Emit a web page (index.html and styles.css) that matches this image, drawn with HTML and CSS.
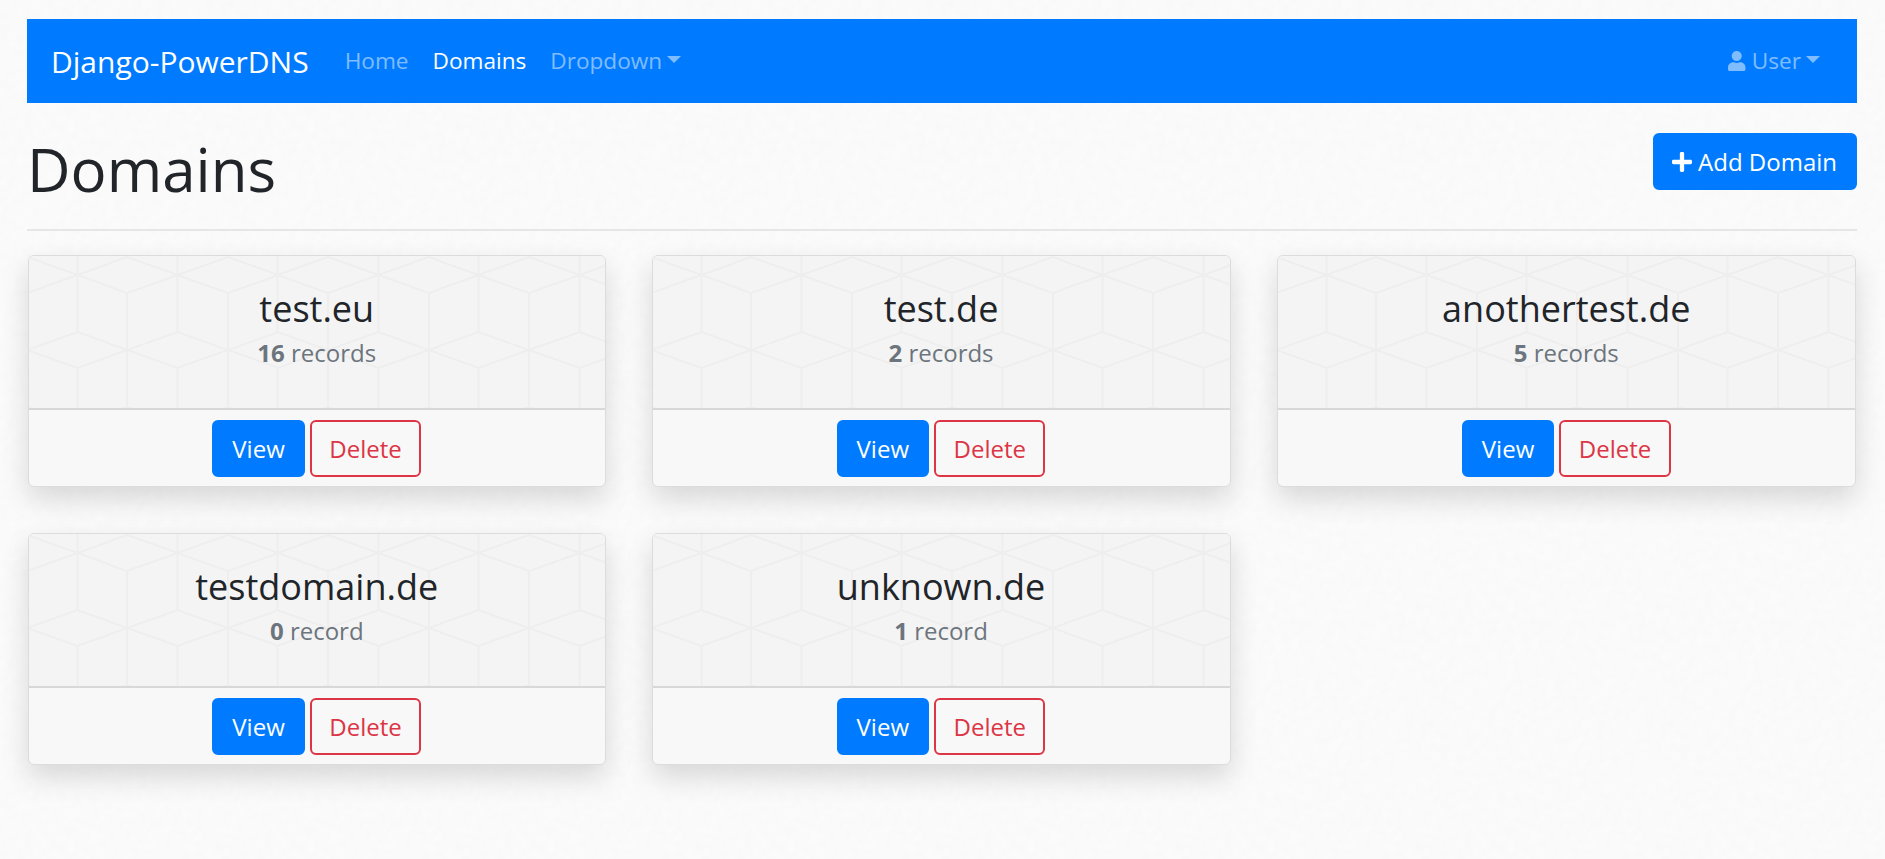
FILE: index.html
```html
<!DOCTYPE html>
<html lang="en">
<head>
<meta charset="utf-8">
<title>Domains - Django-PowerDNS</title>
<link rel="stylesheet" href="styles.css">
</head>
<body>
<nav class="navbar">
  <a class="brand" href="#">Django-PowerDNS</a>
  <ul class="nav-list">
    <li><a class="nav-link" href="#">Home</a></li>
    <li><a class="nav-link active" href="#">Domains</a></li>
    <li><a class="nav-link caret" href="#">Dropdown</a></li>
  </ul>
  <a class="nav-link caret user-link" href="#"><svg class="icon-user" viewBox="0 0 448 512" aria-hidden="true"><path d="M224 256c70.7 0 128-57.3 128-128S294.7 0 224 0 96 57.3 96 128s57.3 128 128 128zm89.6 32h-16.7c-22.2 10.2-46.9 16-72.9 16s-50.6-5.8-72.9-16h-16.7C60.2 288 0 348.2 0 422.4V464c0 26.5 21.5 48 48 48h352c26.5 0 48-21.5 48-48v-41.6c0-74.2-60.2-134.4-134.4-134.4z"/></svg> User</a>
</nav>
<main class="content">
  <header class="page-head">
    <h1 class="page-title">Domains</h1>
    <a class="btn btn-primary btn-add" href="#"><svg class="icon-plus" viewBox="0 0 448 512" aria-hidden="true"><path d="M416 208H272V64c0-17.67-14.33-32-32-32h-32c-17.67 0-32 14.33-32 32v144H32c-17.67 0-32 14.33-32 32v32c0 17.67 14.33 32 32 32h144v144c0 17.67 14.33 32 32 32h32c17.67 0 32-14.33 32-32V304h144c17.67 0 32-14.33 32-32v-32c0-17.67-14.33-32-32-32z"/></svg> Add Domain</a>
  </header>
  <hr class="divider">
  <section class="card-grid">
    <article class="card">
      <div class="card-body"><h4 class="card-title">test.eu</h4><p class="card-text"><strong>16</strong> records</p></div>
      <div class="card-footer"><a class="btn btn-primary" href="#">View</a><a class="btn btn-outline" href="#">Delete</a></div>
    </article>
    <article class="card">
      <div class="card-body"><h4 class="card-title">test.de</h4><p class="card-text"><strong>2</strong> records</p></div>
      <div class="card-footer"><a class="btn btn-primary" href="#">View</a><a class="btn btn-outline" href="#">Delete</a></div>
    </article>
    <article class="card">
      <div class="card-body"><h4 class="card-title">anothertest.de</h4><p class="card-text"><strong>5</strong> records</p></div>
      <div class="card-footer"><a class="btn btn-primary" href="#">View</a><a class="btn btn-outline" href="#">Delete</a></div>
    </article>
    <article class="card">
      <div class="card-body"><h4 class="card-title">testdomain.de</h4><p class="card-text"><strong>0</strong> record</p></div>
      <div class="card-footer"><a class="btn btn-primary" href="#">View</a><a class="btn btn-outline" href="#">Delete</a></div>
    </article>
    <article class="card">
      <div class="card-body"><h4 class="card-title">unknown.de</h4><p class="card-text"><strong>1</strong> record</p></div>
      <div class="card-footer"><a class="btn btn-primary" href="#">View</a><a class="btn btn-outline" href="#">Delete</a></div>
    </article>
  </section>
</main>
</body>
</html>
```
FILE: styles.css
```css
* { box-sizing: border-box; }
html, body { height: 100%; }
body {
  margin: 0;
  padding: 19px 28px 0 27px;
  background-color: #fcfcfc;
  background-image: url("data:image/svg+xml,%3Csvg xmlns='http://www.w3.org/2000/svg' width='240' height='240'%3E%3Cfilter id='n'%3E%3CfeTurbulence type='fractalNoise' baseFrequency='.12' numOctaves='3' stitchTiles='stitch'/%3E%3CfeColorMatrix values='0 0 0 0 0 0 0 0 0 0 0 0 0 0 0 .016 0 0 0 0'/%3E%3C/filter%3E%3Crect width='240' height='240' filter='url(%23n)'/%3E%3C/svg%3E");
  color: #212529;
  font-family: "Open Sans", sans-serif;
  font-size: 24px;
  line-height: 36px;
  overflow: hidden;
}
a { text-decoration: none; }
.navbar {
  display: flex;
  align-items: center;
  height: 84px;
  padding: 0 24px;
  background: #007bff;
}
.brand {
  margin-right: 24px;
  color: #fff;
  font-size: 30px;
  line-height: 45px;
}
.nav-list {
  display: flex;
  flex: 1;
  margin: 0;
  padding: 0;
  list-style: none;
}
.nav-link {
  display: block;
  padding: 0 12px;
  color: rgba(255,255,255,.5);
  font-size: 22.6px;
}
.nav-link.active { color: #fff; }
.caret::after {
  content: "";
  display: inline-block;
  margin-left: 5px;
  vertical-align: 6px;
  border-top: 7px solid;
  border-left: 7px solid transparent;
  border-right: 7px solid transparent;
}
.user-link { padding-right: 13px; }
.icon-user { width: 17.5px; height: 20px; fill: currentColor; vertical-align: -2px; }
.icon-plus { width: 20px; height: 24px; fill: currentColor; vertical-align: -3px; }
.page-head {
  display: flex;
  justify-content: space-between;
  align-items: flex-start;
  padding-top: 30px;
  height: 108px;
}
.page-title {
  margin: 0;
  font-size: 60px;
  font-weight: 400;
  line-height: 72px;
}
.btn {
  display: inline-block;
  padding: 9px 18px;
  border: 2px solid transparent;
  border-radius: 6px;
  font-size: 24px;
  line-height: 35px;
  color: #fff;
}
.btn-add { padding-left: 17px; }
.btn-primary { background: #007bff; border-color: #007bff; }
.btn-outline {
  padding-left: 17.5px;
  padding-right: 17.5px;
  color: #dc3545;
  border-color: #dc3545;
  background: transparent;
}
.divider {
  margin: 18px 0 24px;
  border: 0;
  border-top: 2px solid #e6e6e6;
}
.card-grid {
  display: grid;
  grid-template-columns: 577.5px 579px 579.5px;
  column-gap: 46px;
  row-gap: 46px;
  margin-left: 1px;
}
.card {
  display: flex;
  flex-direction: column;
  height: 232px;
  border: 1px solid #dcdcdc;
  border-radius: 6px;
  background: #f8f8f8;
  box-shadow: 0 12px 28px rgba(0,0,0,.14);
  overflow: hidden;
}
.card-body {
  height: 154px;
  padding-top: 31px;
  border-bottom: 2px solid #d8d8d8;
  text-align: center;
  background-color: #f4f4f4;
  background-image: url("data:image/svg+xml,%3Csvg xmlns='http://www.w3.org/2000/svg' width='100' height='150'%3E%3Cpath d='M0 0V1L50 19L100 1V0M0 37L50 19L100 37M50 19V76M0 94L50 76L100 94L50 112L0 94M50 112V150M50 0V19M0 37V151M100 37V151' fill='none' stroke='%23eeeeee' stroke-width='2'/%3E%3C/svg%3E");
  background-size: 100.4px 150px;
  background-position: -2px 0;
}
.card-title {
  margin: 0 0 4px;
  font-size: 36px;
  font-weight: 400;
  line-height: 44px;
}
.card-text { margin: 0; color: #6c757d; }
.card-text strong { font-weight: 700; }
.card-footer {
  display: flex;
  justify-content: center;
  gap: 5px;
  padding-top: 10px;
}
```
